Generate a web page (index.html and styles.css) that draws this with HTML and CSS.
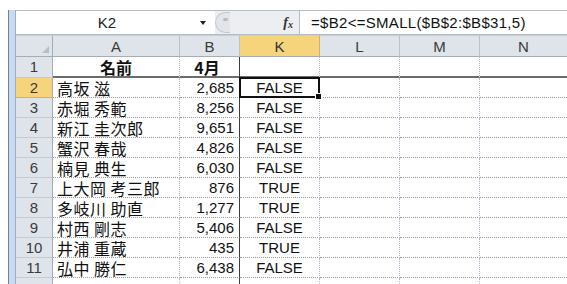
FILE: index.html
```html
<!DOCTYPE html>
<html lang="ja">
<head>
<meta charset="utf-8">
<link rel="stylesheet" href="styles.css">
</head>
<body>
<div class="frame">
  <div class="stripe"></div>
  <div class="main">
    <div class="fbar">
      <div class="namebox"><span class="ref">K2</span><span class="drop"></span></div>
      <div class="mid">
        <span class="split"><span class="dot"></span></span>
        <span class="fx">f<sub>x</sub></span>
      </div>
      <div class="input">=$B2&lt;=SMALL($B$2:$B$31,5)</div>
    </div>
    <div class="sheet">
      <div class="ch corner"><span class="tri"></span></div>
      <div class="ch">A</div>
      <div class="ch">B</div>
      <div class="ch sel">K</div>
      <div class="ch">L</div>
      <div class="ch">M</div>
      <div class="ch last">N</div>

      <div class="rh r1">1</div>
      <div class="c r1 head">名前</div>
      <div class="c r1 num head ctr bcol">4月</div>
      <div class="c r1"></div>
      <div class="c r1"></div>
      <div class="c r1"></div>
      <div class="c r1 last"></div>

      <div class="rh sel">2</div>
      <div class="c name">高坂 滋</div>
      <div class="c num bcol">2,685</div>
      <div class="c ctr active">FALSE</div>
      <div class="c"></div><div class="c"></div><div class="c last"></div>

      <div class="rh">3</div>
      <div class="c name">赤堀 秀範</div>
      <div class="c num bcol">8,256</div>
      <div class="c ctr">FALSE</div>
      <div class="c"></div><div class="c"></div><div class="c last"></div>

      <div class="rh">4</div>
      <div class="c name">新江 圭次郎</div>
      <div class="c num bcol">9,651</div>
      <div class="c ctr">FALSE</div>
      <div class="c"></div><div class="c"></div><div class="c last"></div>

      <div class="rh">5</div>
      <div class="c name">蟹沢 春哉</div>
      <div class="c num bcol">4,826</div>
      <div class="c ctr">FALSE</div>
      <div class="c"></div><div class="c"></div><div class="c last"></div>

      <div class="rh">6</div>
      <div class="c name">楠見 典生</div>
      <div class="c num bcol">6,030</div>
      <div class="c ctr">FALSE</div>
      <div class="c"></div><div class="c"></div><div class="c last"></div>

      <div class="rh">7</div>
      <div class="c name">上大岡 考三郎</div>
      <div class="c num bcol">876</div>
      <div class="c ctr">TRUE</div>
      <div class="c"></div><div class="c"></div><div class="c last"></div>

      <div class="rh">8</div>
      <div class="c name">多岐川 助直</div>
      <div class="c num bcol">1,277</div>
      <div class="c ctr">TRUE</div>
      <div class="c"></div><div class="c"></div><div class="c last"></div>

      <div class="rh">9</div>
      <div class="c name">村西 剛志</div>
      <div class="c num bcol">5,406</div>
      <div class="c ctr">FALSE</div>
      <div class="c"></div><div class="c"></div><div class="c last"></div>

      <div class="rh">10</div>
      <div class="c name">井浦 重蔵</div>
      <div class="c num bcol">435</div>
      <div class="c ctr">TRUE</div>
      <div class="c"></div><div class="c"></div><div class="c last"></div>

      <div class="rh">11</div>
      <div class="c name">弘中 勝仁</div>
      <div class="c num bcol">6,438</div>
      <div class="c ctr">FALSE</div>
      <div class="c"></div><div class="c"></div><div class="c last"></div>

      <div class="rh"></div>
      <div class="c"></div>
      <div class="c bcol"></div>
      <div class="c"></div>
      <div class="c"></div><div class="c"></div><div class="c last"></div>
    </div>
  </div>
</div>
</body>
</html>
```

FILE: styles.css
```css
html, body {
  margin: 0;
  padding: 0;
  background: #ffffff;
  overflow: hidden;
}
body {
  width: 567px;
  height: 284px;
  font-family: "Liberation Sans", "Noto Sans CJK JP", sans-serif;
  color: #111;
}
.frame {
  display: flex;
  padding-top: 10px;
  padding-left: 8px;
  height: 274px;
}
.stripe {
  width: 8px;
  box-sizing: border-box;
  border-left: 1px solid #6f8196;
  border-right: 1px solid #9fb0c4;
  background: #c9dbf0;
  flex: none;
}
.main {
  flex: 1;
  display: flex;
  flex-direction: column;
  min-width: 0;
}
.fbar {
  height: 25px;
  box-sizing: border-box;
  border-top: 1px solid #b4bcc7;
  border-bottom: 1px solid #b4bcc7;
  display: flex;
  background: #eceef1;
}
.namebox {
  width: 199px;
  background: #fff;
  display: flex;
  align-items: center;
  font-size: 15px;
  color: #222;
}
.namebox .ref {
  flex: 1;
  text-align: center;
  padding-left: 4px;
}
.drop {
  width: 0;
  height: 0;
  border-left: 3px solid transparent;
  border-right: 3px solid transparent;
  border-top: 4px solid #222;
  margin-right: 9px;
  margin-left: 6px;
}
.mid {
  width: 84px;
  display: flex;
  align-items: center;
  justify-content: space-between;
  padding-right: 6px;
  box-sizing: border-box;
}
.split {
  width: 15px;
  height: 21px;
  box-sizing: border-box;
  border: 1px solid #c3c8cf;
  border-right: none;
  border-radius: 11px 0 0 11px;
  background: #e2e5e9;
  display: flex;
  align-items: center;
  justify-content: flex-end;
}
.split .dot {
  width: 5px;
  height: 3px;
  background: #b6bcc4;
  border-radius: 2px;
  margin-right: 2px;
  margin-bottom: 6px;
}
.fx {
  font-family: "Liberation Serif", serif;
  font-style: italic;
  font-weight: bold;
  font-size: 14px;
  color: #333;
}
.fx sub {
  font-size: 10px;
  vertical-align: -1px;
}
.input {
  flex: 1;
  background: #fff;
  border-left: 1px solid #b4bcc7;
  font-size: 15px;
  letter-spacing: 0.3px;
  line-height: 23px;
  padding-left: 11px;
  color: #111;
  white-space: nowrap;
}
.sheet {
  display: grid;
  grid-template-columns: 37px 127px 60px 80px 80px 80px 1fr;
  grid-template-rows: 22px 21px repeat(11, 20px);
}
.ch {
  background: #dfe4ea;
  border-top: 1px solid #c8ced6;
  border-bottom: 1px solid #a3adba;
  border-right: 1px solid #b9c3cf;
  box-sizing: border-box;
  display: flex;
  align-items: center;
  justify-content: center;
  font-size: 15px;
  line-height: 18px;
  color: #3a3a3a;
  padding-top: 1px;
}
.ch.sel {
  background: #f6d47c;
  border-right-color: #d8b15a;
  color: #333;
}
.ch.last { border-right: none; }
.corner {
  position: relative;
  border-right-color: #a3adba;
}
.tri {
  position: absolute;
  right: 3px;
  bottom: 3px;
  width: 0;
  height: 0;
  border-left: 7px solid transparent;
  border-bottom: 7px solid #b7bec8;
}
.rh {
  background: #dfe4ea;
  border-right: 1px solid #a3adba;
  border-bottom: 1px solid #c6ccd5;
  box-sizing: border-box;
  display: flex;
  align-items: center;
  justify-content: center;
  font-size: 15px;
  line-height: 18px;
  color: #3a3a3a;
}
.rh.sel {
  background: #f6d47c;
  border-bottom-color: #d8b15a;
}
.c {
  box-sizing: border-box;
  border-right: 1px dotted #b3b3cc;
  border-bottom: 1px dotted #9c9c9c;
  display: flex;
  align-items: center;
  font-size: 15px;
  line-height: 18px;
  color: #111;
  white-space: nowrap;
}
.c.last { border-right: none; }
.c.r1 {
  border-bottom: 2px solid #6c6c6c;
}
.head {
  font-family: "Noto Sans CJK JP", sans-serif;
  font-weight: bold;
  justify-content: center;
  font-size: 16px;
  line-height: 18px;
}
.name {
  font-family: "Noto Sans CJK JP", sans-serif;
  font-size: 16px;
  line-height: 18px;
  padding-left: 4px;
  letter-spacing: 0.5px;
}
.num {
  justify-content: flex-end;
  padding-right: 5px;
}
.ctr {
  justify-content: center;
}
.bcol {
  border-right: 1px solid #3c3c3c;
}
.active {
  position: relative;
}
.active::after {
  content: "";
  position: absolute;
  left: -1px;
  top: -1px;
  right: -1px;
  bottom: -1px;
  border: 2px solid #111;
}
.active::before {
  content: "";
  position: absolute;
  right: -3px;
  bottom: -3px;
  width: 5px;
  height: 5px;
  background: #111;
  border: 1px solid #fff;
  z-index: 2;
}
```
